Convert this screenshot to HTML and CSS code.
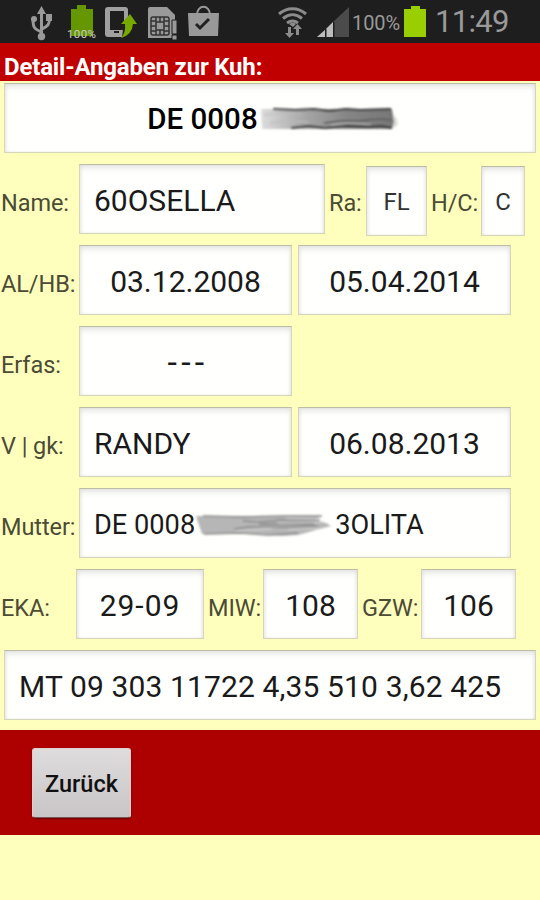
FILE: index.html
```html
<!DOCTYPE html>
<html lang="de">
<head>
<meta charset="utf-8">
<title>Detail-Angaben zur Kuh</title>
<link rel="stylesheet" href="styles.css">
</head>
<body>
<header class="status">
  <svg class="status-icons" width="230" height="42" viewBox="0 0 230 42" aria-hidden="true">
    <g stroke="#999" fill="none" stroke-width="3"><path d="M41.500 10v26M41.500 31c-7-3-8.500-4-8.500-13M41.500 28c7-3 8-5 8-11"/></g>
    <g fill="#999"><path d="M37 13l4.500-8 4.500 8z"/><circle cx="41.500" cy="35.500" r="3.700"/><circle cx="34" cy="18" r="3"/><path d="M46 13h6v7h-6z"/></g>
    <path fill="#659800" d="M77 4h9v4h7v27H71V8h6z"/>
    <path fill="#a0a0a0" fill-rule="evenodd" d="M108 6h17q3 0 3 3v7l-4 5v-11h-14v19h13l-1 7h-14q-3 0-3-3V9q0-3 3-3zm6 24v2h5v-2z"/>
    <path fill="#78a900" d="M130 13l7 10h-4q-1 11-12 14 5-6 4-14h-4z"/>
    <path fill="#999" d="M150 6h17l8 8v6h-3v17h-24V8q0-2 2-2z"/>
    <g fill="none" stroke="#333" stroke-width="1.500"><rect x="151" y="16" width="18" height="18" rx="2"/><rect x="156" y="21" width="8" height="8"/><path d="M151 20h5v-4M164 16v4h5M151 30h5v4M164 34v-4h5M151 25h5M164 25h5M160 16v5M160 29v5"/></g>
    <path fill="#999" stroke="#1e1e1e" d="M172 19h5v14h-5zM172 34h5v5h-5z"/>
    <path fill="#999" d="M188 12h31l-1 23h-29z"/>
    <path fill="none" stroke="#999" stroke-width="2" d="M197 14c0-11 13-11 13 0"/>
    <path fill="none" stroke="#222" stroke-width="3" d="M196 23l4 4 9-9"/>
    <text class="mini" x="67" y="37" textLength="29">100%</text>
  </svg>
  <svg class="signal" width="76" height="42" viewBox="0 0 76 42" aria-hidden="true">
    <g fill="none" stroke="#8b8b8b" stroke-width="3"><path d="M3 13c8-7 19-7 27 0M7 17.500c6-5 13-5 19 0M11 22c4-3 7-3 11 0"/></g>
    <path fill="#8b8b8b" d="M13 23q4-3 7 0l-3 3zM12 26h3v6h3l-4.500 5-4.500-5h3zM20 34v-6h-3l4.500-5 4.500 5h-3v6z"/>
    <path fill="#4b4b4b" d="M41 36L73 6v30z"/><path fill="#bbb" d="M41 36l8-7v7zM50 28l7-7v15h-7z"/><path fill="#1e1e1e" d="M49 28h1.500v8H49zM57 21h1.500v15H57z"/>
  </svg>
  <span class="percent">100%</span>
  <svg class="battery" width="22" height="31" viewBox="0 0 22 31" aria-hidden="true"><path fill="#99cf00" d="M7 0h9v3h6v28H0V3h7z"/></svg>
  <time class="clock">11:49</time>
</header>
<h1 class="title"><span>Detail-Angaben zur Kuh:</span></h1>
<main class="form">
  <div class="field ident"><span>DE 0008</span>
    <svg class="smudge" width="142" height="28" viewBox="0 0 142 28" aria-hidden="true">
      <defs><linearGradient id="ink"><stop offset="0" stop-color="#ddd"/><stop offset=".3" stop-color="#aaa"/><stop offset=".65" stop-color="#858585"/><stop offset="1" stop-color="#777"/></linearGradient>
      <filter id="soft" x="-5%" y="-20%" width="110%" height="140%"><feGaussianBlur stdDeviation=".9"/></filter></defs>
      <g filter="url(#soft)"><path fill="#ddd" d="M132 6l6 8 1 6-7 4z"/><path fill="url(#ink)" d="M2 4h131l1 7 1 6-2 7H3z"/>
      <g fill="none" stroke="#333" stroke-width="1.800"><path d="M14 4l22 1 19-1 15 2 17-2 14 1 31-1M32 23l18-2 16 2 19-2 24 1 13-1 11 2"/></g>
      <g fill="none" stroke="#555" stroke-width="1.300"><path d="M65 18q18-3 35-2 18-3 32-1M80 21q20-4 30-3"/></g>
      <g fill="none" stroke="#bbb" stroke-width="1.200"><path d="M5 10q24-3 38 0M11 18q20-3 39-1M72 20q19-3 40-1"/></g></g>
    </svg>
  </div>
  <div class="row">
    <label class="lead">Name:</label><div class="field left w246">60OSELLA</div>
    <label class="ra">Ra:</label><div class="field small w61 drop">FL</div>
    <label class="hc">H/C:</label><div class="field small w44 drop">C</div>
  </div>
  <div class="row"><label class="lead">AL/HB:</label><div class="field w213">03.12.2008</div><div class="field w213 second">05.04.2014</div></div>
  <div class="row"><label class="lead">Erfas:</label><div class="field w213 dashes">---</div></div>
  <div class="row"><label class="lead">V | gk:</label><div class="field left w213">RANDY</div><div class="field w213 second">06.08.2013</div></div>
  <div class="row"><label class="lead">Mutter:</label><div class="field left mother"><span>DE 0008</span>
    <svg class="smudge2" width="139" height="28" viewBox="0 0 139 28" aria-hidden="true"><g filter="url(#soft)">
      <path fill="#b6b6b6" d="M1 5h126l-8 4 12 3 5 3-12 3-10 3-11 3-16 1-34-2H7z"/>
      <g fill="none" stroke="#888" stroke-width="1.300"><path d="M8 5l39 1 40-1h40M48 10q19 2 37-1 20 1 40 0M39 18q25-4 48-2l36-1M9 23l36-1 28 2 30-2M64 13h55"/></g>
      <g fill="none" stroke="#d4d4d4" stroke-width="1.200"><path d="M40 20l37-2M91 7l32 1M83 12l46-1M93 19l30-2"/></g>
    </g></svg><span>3OLITA</span></div></div>
  <div class="row">
    <label class="lead eka">EKA:</label><div class="field w128 age">29-09</div>
    <label class="miw">MIW:</label><div class="field w95">108</div>
    <label class="gzw">GZW:</label><div class="field w95">106</div>
  </div>
  <div class="field left milk">MT 09 303 11722 4,35 510 3,62 425</div>
</main>
<footer class="actions"><button class="back" type="button">Zurück</button></footer>
</body>
</html>
```
FILE: styles.css
```css
* { box-sizing: border-box; }
body { margin: 0; width: 540px; height: 900px; overflow: hidden; background: #ffffbd; color: #1a1a1a; font-family: Roboto, "Liberation Sans", sans-serif; }
svg { display: block; flex: none; }
.status { height: 43px; background: #1e1e1e; display: flex; align-items: center; color: #999; }
.mini { font-size: 11.5px; fill: #ccc; }
.signal { margin-left: 46px; }
.percent { font-size: 20px; width: 52px; margin-top: 3px; letter-spacing: -.1px; white-space: nowrap; }
.battery { margin-top: -1px; }
.clock { font-size: 31px; margin-left: 9px; letter-spacing: -.7px; }
.title { margin: 0; height: 38px; padding: 8px 0 0 4px; background: #c00000; color: #fff; font-size: 24px; line-height: 32px; font-weight: 700; letter-spacing: -.18px; white-space: nowrap; }
.form { height: 649px; padding-top: 2px; }
.field { flex: none; height: 70px; display: flex; align-items: center; justify-content: center; border: 1px solid #d5d5b9; border-top-color: #bdbda5; background: #fffffd; box-shadow: inset 0 5px 7px -3px #dededc, inset 2px 0 4px -2px #ddd, inset -2px 0 4px -2px #ddd; font-size: 30px; padding-top: 2px; white-space: nowrap; }
.row { height: 71px; margin-bottom: 10px; display: flex; }
.ident { width: 532px; margin: 0 0 11px 4px; font-size: 29.5px; font-weight: 500; color: #000; }
.smudge { margin-right: -8px; margin-left: 1px; }
label { font-size: 23.5px; line-height: 28px; padding-top: 25px; letter-spacing: -.07px; color: #4b4b36; white-space: nowrap; }
.lead { width: 79px; padding-left: 1px; flex: none; }
.left { justify-content: flex-start; padding-left: 14px; }
.small { font-size: 24px; color: #333; }
.drop { margin-top: 2px; }
.w246 { width: 246px; } .w213 { width: 213px; } .w128 { width: 128px; } .w95 { width: 95px; } .w61 { width: 61px; } .w44 { width: 44px; }
.second { margin-left: 6px; }
.ra { width: 41px; padding-left: 4px; }
.hc { width: 54px; padding-left: 4px; }
.mother { width: 432px; font-size: 27.2px; padding-top: 3px; }
.smudge2 { margin-right: 1px; }
.dashes { font-size: 34px; letter-spacing: 4.2px; padding-left: 5px; }
.age { letter-spacing: 1px; }
.eka { width: 76px; }
.miw { width: 59px; padding-left: 4px; }
.gzw { width: 63px; padding-left: 4px; }
.milk { width: 532px; margin-left: 4px; letter-spacing: .13px; }
.actions { height: 105px; background: #ad0000; padding: 18px 0 0 32px; }
.back { display: block; width: 99px; height: 70px; padding: 2px 0 0; border: 1px solid #dfcece; border-bottom-color: #755; border-radius: 3px; background: linear-gradient(#dedcdd, #c9c5c6); font: 500 23.5px Roboto, sans-serif; color: #111; box-shadow: 0 1px 2px #600; }
```
